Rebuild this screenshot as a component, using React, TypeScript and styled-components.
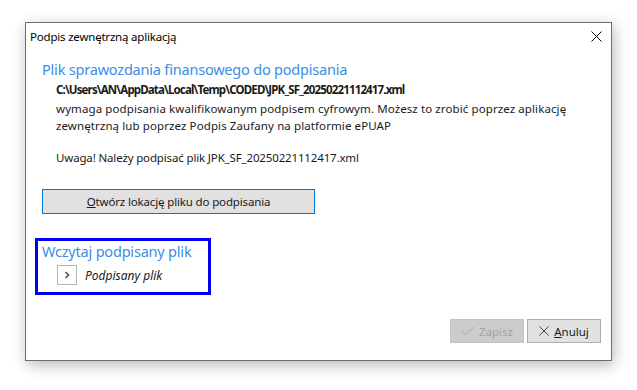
import { createGlobalStyle, styled } from 'styled-components';

const GlobalStyle = createGlobalStyle`
  html, body {
    margin: 0;
    padding: 0;
    background: #ffffff;
  }
  body {
    font-family: "Noto Sans", "Open Sans", "Liberation Sans", sans-serif;
    color: #000000;
  }
`;

const Page = styled.div`
  width: 637px;
  height: 390px;
  padding: 22px 25px 0 25px;
  box-sizing: border-box;
`;

const Window = styled.div`
  width: 587px;
  height: 339px;
  box-sizing: border-box;
  border: 1px solid #6e6e6e;
  background: #ffffff;
  box-shadow: 2px 4px 14px rgba(0, 0, 0, 0.28);
  display: flex;
  flex-direction: column;
`;

const TitleBar = styled.div`
  height: 26px;
  display: flex;
  align-items: center;
  justify-content: space-between;
  padding: 0 9px 0 4px;
`;

const TitleText = styled.span`
  font-size: 11.5px;
  letter-spacing: -0.2px;
`;

const Content = styled.div`
  padding: 0 0 0 16px;
  display: flex;
  flex-direction: column;
  align-items: flex-start;
`;

const Heading = styled.div<{ $top?: number }>`
  margin-top: ${({ $top }) => $top ?? 0}px;
  font-size: 14.5px;
  line-height: 20px;
  color: #3a8ee6;
  letter-spacing: -0.2px;
`;

const PathText = styled.div`
  margin-top: 3px;
  padding-left: 14px;
  font-size: 11.5px;
  line-height: 16px;
  font-weight: 700;
  letter-spacing: -0.85px;
  color: #1a1a1a;
`;

const BodyText = styled.div<{ $top?: number; $spacing?: number }>`
  margin-top: ${({ $top }) => $top ?? 0}px;
  padding-left: 14px;
  width: 530px;
  font-size: 11.5px;
  line-height: 17px;
  letter-spacing: ${({ $spacing }) => $spacing ?? -0.15}px;
  color: #1a1a1a;
`;

const OpenButton = styled.button`
  margin-top: 23px;
  width: 273px;
  height: 25px;
  box-sizing: border-box;
  border: 1px solid #0078d7;
  background: #e1e1e1;
  font-family: inherit;
  font-size: 11.5px;
  letter-spacing: -0.15px;
  color: #1a1a1a;
  padding: 0;
`;

const LoadBox = styled.div`
  margin: 24px 0 0 -7px;
  width: 176px;
  height: 57px;
  box-sizing: border-box;
  border: 3px solid #0000f0;
  padding: 0 0 0 4px;
`;

const FileRow = styled.div`
  margin-top: 4px;
  padding-left: 15px;
  display: flex;
  align-items: center;
  gap: 8px;
`;

const ExpandBox = styled.div`
  width: 20px;
  height: 20px;
  box-sizing: border-box;
  border: 1px solid #b4b4b4;
  display: flex;
  align-items: center;
  justify-content: center;
`;

const FileLabel = styled.span`
  font-size: 12px;
  font-style: italic;
  color: #1a1a1a;
`;

const Footer = styled.div`
  margin-top: auto;
  padding: 0 10px 17px 0;
  display: flex;
  justify-content: flex-end;
  gap: 3px;
`;

const FooterButton = styled.button<{ $disabled?: boolean }>`
  width: 74px;
  height: 24px;
  box-sizing: border-box;
  border: 1px solid ${({ $disabled }) => ($disabled ? '#c4c4c4' : '#adadad')};
  background: ${({ $disabled }) => ($disabled ? '#cccccc' : '#e1e1e1')};
  color: ${({ $disabled }) => ($disabled ? '#a3a3a3' : '#1a1a1a')};
  font-family: inherit;
  font-size: 11.5px;
  display: flex;
  align-items: center;
  justify-content: center;
  gap: 5px;
  padding: 0;
`;

const CloseIcon = () => (
  <svg width="11" height="11" viewBox="0 0 11 11">
    <path d="M0.5 0.5 L10.5 10.5 M10.5 0.5 L0.5 10.5" stroke="#000" strokeWidth="1" />
  </svg>
);

const App = () => (
  <>
    <GlobalStyle />
    <Page>
      <Window>
        <TitleBar>
          <TitleText>Podpis zewnętrzną aplikacją</TitleText>
          <CloseIcon />
        </TitleBar>
        <Content>
          <Heading $top={10}>Plik sprawozdania finansowego do podpisania</Heading>
          <PathText>C:\Users\AN\AppData\Local\Temp\CODED\JPK_SF_20250221112417.xml</PathText>
          <BodyText $top={2} $spacing={0.1}>
            wymaga podpisania kwalifikowanym podpisem cyfrowym. Możesz to zrobić poprzez aplikację
            zewnętrzną lub poprzez Podpis Zaufany na platformie ePUAP
          </BodyText>
          <BodyText $top={15}>Uwaga! Należy podpisać plik JPK_SF_20250221112417.xml</BodyText>
          <OpenButton>
            <u>O</u>twórz lokację pliku do podpisania
          </OpenButton>
          <LoadBox>
            <Heading>Wczytaj podpisany plik</Heading>
            <FileRow>
              <ExpandBox>
                <svg width="8" height="8" viewBox="0 0 8 8">
                  <path d="M2.5 1 L5.5 4 L2.5 7" stroke="#555" strokeWidth="1.6" fill="none" />
                </svg>
              </ExpandBox>
              <FileLabel>Podpisany plik</FileLabel>
            </FileRow>
          </LoadBox>
        </Content>
        <Footer>
          <FooterButton $disabled>
            <svg width="13" height="10" viewBox="0 0 13 10">
              <path d="M0.5 5 L4.5 9 L12.5 1" stroke="#a8a8a8" strokeWidth="1" fill="none" />
            </svg>
            Zapisz
          </FooterButton>
          <FooterButton>
            <svg width="10" height="10" viewBox="0 0 10 10">
              <path d="M0.5 0.5 L9.5 9.5 M9.5 0.5 L0.5 9.5" stroke="#444" strokeWidth="1" />
            </svg>
            <span>
              <u>A</u>nuluj
            </span>
          </FooterButton>
        </Footer>
      </Window>
    </Page>
  </>
);

export default App;
